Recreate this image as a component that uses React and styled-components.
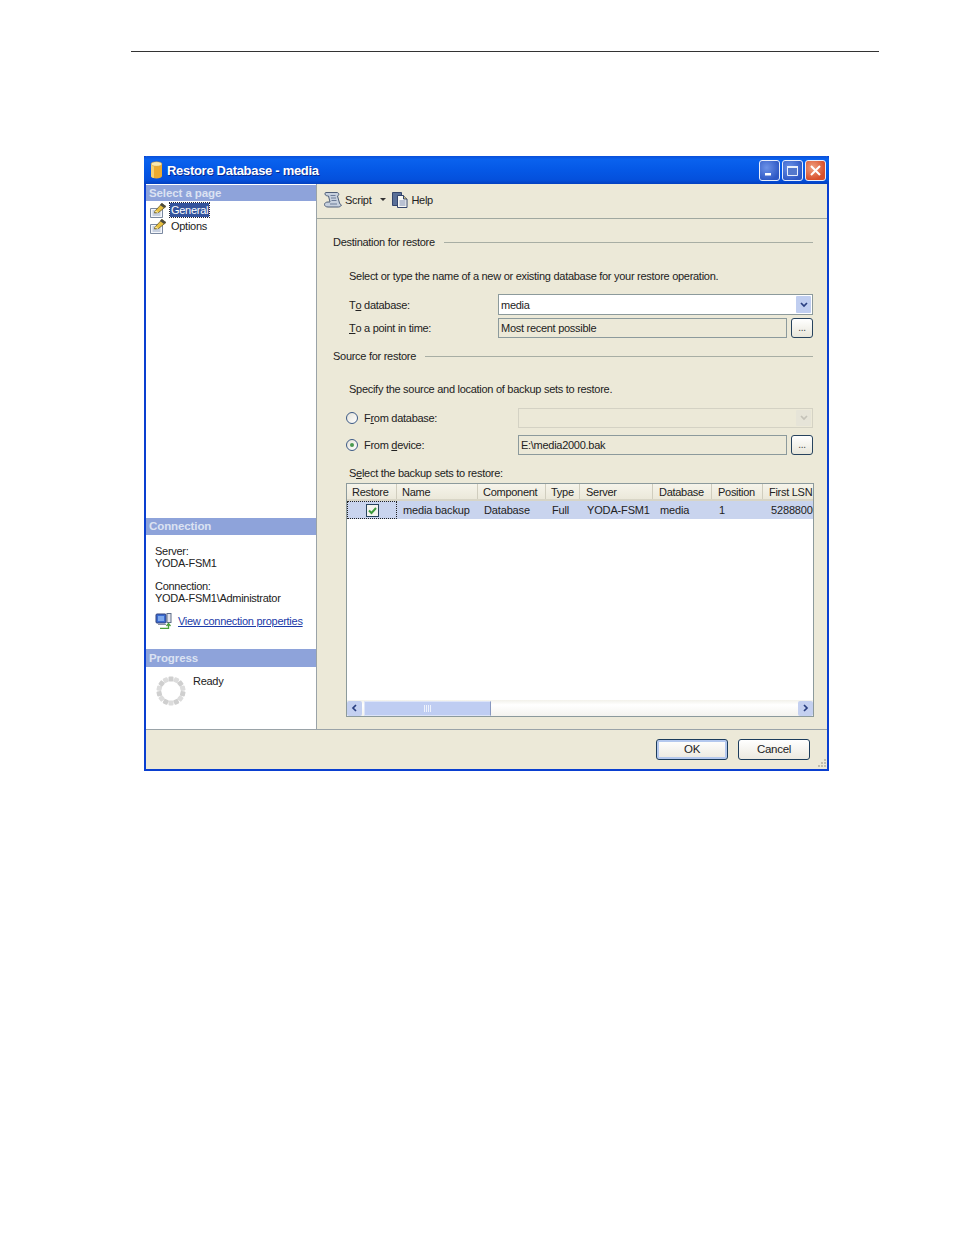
import React from 'react';
import styled, { createGlobalStyle } from 'styled-components';

const Global = createGlobalStyle`
  html, body { margin: 0; padding: 0; background: #fff; }
  body { font-family: "Liberation Sans", Arial, sans-serif; font-size: 11px; letter-spacing: -0.28px; color: #222; }
`;

const Page = styled.div`
  width: 954px;
  height: 1235px;
  padding: 51px 0 0 0;
  box-sizing: border-box;
  overflow: hidden;
`;

const TopRule = styled.div`
  margin-left: 131px;
  width: 748px;
  height: 1px;
  background: #333;
`;

const Window = styled.div`
  margin: 104px 0 0 144px;
  width: 685px;
  height: 615px;
  box-sizing: border-box;
  border: 2px solid #0a3fd0;
  border-top: none;
  display: flex;
  flex-direction: column;
  background: #ece9d8;
  position: relative;
`;

const TitleBar = styled.div`
  height: 28px;
  margin: 0 -2px;
  flex: none;
  display: flex;
  align-items: center;
  padding: 0 3px 0 6px;
  background: linear-gradient(180deg, #0a4fd8 0%, #0a62ee 12%, #0558e6 50%, #0450dc 85%, #0340c0 100%);
  border-radius: 3px 3px 0 0;
`;

const TitleText = styled.span`
  margin-left: 4px;
  flex: 1;
  color: #fff;
  font-weight: 700;
  font-size: 13px;
  letter-spacing: -0.3px;
  text-shadow: 1px 1px 0 #0a2a90;
`;

const CtlButton = styled.div`
  width: 21px;
  height: 21px;
  margin-left: 2px;
  box-sizing: border-box;
  border: 1px solid #e8eefc;
  border-radius: 3px;
  background: ${p => p.$close
    ? 'radial-gradient(circle at 35% 35%, #f0a080, #d8502c 70%)'
    : 'radial-gradient(circle at 35% 35%, #6c92e8, #2e58c4 75%)'};
  display: flex;
  align-items: center;
  justify-content: center;
`;

const Body = styled.div`
  flex: 1;
  display: flex;
  min-height: 0;
`;

const Sidebar = styled.div`
  width: 171px;
  flex: none;
  box-sizing: border-box;
  background: #fff;
  border-right: 1px solid #9aa3a8;
  display: flex;
  flex-direction: column;
  padding-top: 1px;
`;

const SideHead = styled.div`
  height: ${p => p.$h}px;
  flex: none;
  background: #8ea3da;
  color: #dbe2f2;
  font-weight: 700;
  font-size: 11.5px;
  letter-spacing: -0.1px;
  line-height: ${p => p.$h}px;
  padding-left: 3px;
`;

const PageList = styled.div`
  flex: 1;
  padding: 1px 0 0 4px;
`;

const PageItem = styled.div`
  height: 16px;
  display: flex;
  align-items: center;
  gap: 3px;
`;

const PageName = styled.span`
  padding: 0 1px;
  line-height: 14px;
  font-size: 11px;
  color: ${p => (p.$active ? '#fff' : '#222')};
  background: ${p => (p.$active ? '#34539c' : 'transparent')};
  outline: ${p => (p.$active ? '1px dotted #223' : 'none')};
`;

const ConnBody = styled.div`
  height: 114px;
  flex: none;
  box-sizing: border-box;
  padding: 10px 0 0 9px;
`;

const Line = styled.div`
  height: 12px;
  line-height: 12px;
  margin-top: ${p => p.$top || 0}px;
  white-space: nowrap;
`;

const LinkRow = styled.div`
  display: flex;
  align-items: center;
  gap: 6px;
  margin-top: 9px;
  height: 16px;
`;

const Link = styled.span`
  color: #1a3aa8;
  text-decoration: underline;
`;

const ProgressBody = styled.div`
  flex: none;
  height: 62px;
  box-sizing: border-box;
  padding: 8px 0 0 9px;
  display: flex;
  gap: 6px;
`;

const ReadyText = styled.span`
  line-height: 12px;
`;

const Main = styled.div`
  flex: 1;
  display: flex;
  flex-direction: column;
  min-width: 0;
`;

const Toolbar = styled.div`
  height: 35px;
  flex: none;
  box-sizing: border-box;
  border-bottom: 1px solid #a0a8a0;
  display: flex;
  align-items: center;
  padding: 0 0 3px 7px;
`;

const ToolButton = styled.div`
  display: flex;
  align-items: center;
  gap: 3px;
  margin-right: ${p => p.$gap || 0}px;
`;

const DropCaret = styled.span`
  width: 0;
  height: 0;
  margin-left: 6px;
  border-left: 3px solid transparent;
  border-right: 3px solid transparent;
  border-top: 3px solid #333;
`;

const Content = styled.div`
  flex: 1;
  box-sizing: border-box;
  padding: 16px 13px 0 16px;
`;

const SectionHead = styled.div`
  height: 14px;
  line-height: 14px;
  margin: ${p => p.$top || 0}px 1px 0 0;
  display: flex;
  align-items: center;
  gap: 9px;
  white-space: nowrap;
  &::after {
    content: '';
    flex: 1;
    height: 1px;
    background: #a8aea4;
  }
`;

const Hint = styled.div`
  height: 14px;
  line-height: 14px;
  margin: ${p => p.$top}px 0 0 16px;
  white-space: nowrap;
`;

const Row = styled.div`
  display: grid;
  grid-template-columns: ${p => p.$label}px 1fr ${p => (p.$browse ? '22px' : '')};
  column-gap: ${p => (p.$browse ? 4 : 0)}px;
  align-items: center;
  margin: ${p => p.$top}px 1px 0 ${p => p.$left}px;
  height: ${p => p.$h}px;
`;

const Label = styled.span`
  white-space: nowrap;
  display: flex;
  align-items: center;
`;

const Radio = styled.span`
  width: 12px;
  height: 12px;
  margin-right: 6px;
  box-sizing: border-box;
  border-radius: 50%;
  border: 1px solid #3c5a86;
  background: linear-gradient(135deg, #e4e2d8, #fff);
  display: flex;
  align-items: center;
  justify-content: center;
  &::after {
    content: '';
    width: 4px;
    height: 4px;
    border-radius: 50%;
    background: ${p => (p.$on ? '#4a9a50' : 'transparent')};
  }
`;

const Field = styled.div`
  height: ${p => p.$h}px;
  box-sizing: border-box;
  border: 1px solid ${p => (p.$empty ? '#d4d2c4' : '#8c9a9c')};
  background: ${p => (p.$white ? '#fff' : '#ece9d8')};
  display: flex;
  align-items: center;
  padding-left: 2px;
`;

const FieldText = styled.span`
  flex: 1;
`;

const ComboArrow = styled.span`
  width: 15px;
  align-self: stretch;
  margin: 1px;
  border-radius: 1px;
  background: ${p => (p.$off ? '#e6e4d8' : '#c0cef0')};
  display: flex;
  align-items: center;
  justify-content: center;
`;

const Browse = styled.div`
  height: 20px;
  box-sizing: border-box;
  border: 1px solid #27435e;
  border-radius: 3px;
  background: linear-gradient(180deg, #fff, #e8e6da);
  text-align: center;
  line-height: 17px;
  color: #444;
  font-size: 10px;
`;

const GridBox = styled.div`
  margin: 3px 0 0 13px;
  height: 234px;
  box-sizing: border-box;
  border: 1px solid #8c9a9c;
  background: #fff;
  display: flex;
  flex-direction: column;
  overflow: hidden;
`;

const GridHead = styled.div`
  height: 15px;
  flex: none;
  display: flex;
  background: linear-gradient(180deg, #f6f4ea, #ebe8da);
  border-bottom: 2px solid #d8d5c6;
`;

const HeadCell = styled.div`
  width: ${p => p.$w}px;
  flex: none;
  box-sizing: border-box;
  padding-left: ${p => p.$pad}px;
  line-height: 16px;
  white-space: nowrap;
  border-right: 1px solid #d0cdbe;
  &:last-child { border-right: none; }
`;

const GridRow = styled.div`
  height: 18px;
  flex: none;
  display: flex;
  background: #c9d4ee;
`;

const Cell = styled.div`
  width: ${p => p.$w}px;
  flex: none;
  box-sizing: border-box;
  padding-left: ${p => p.$pad}px;
  line-height: 18px;
  letter-spacing: -0.15px;
  white-space: nowrap;
  overflow: hidden;
`;

const CheckCell = styled.div`
  width: ${p => p.$w}px;
  flex: none;
  box-sizing: border-box;
  outline: 1px dotted #222;
  outline-offset: -1px;
  display: flex;
  align-items: center;
  justify-content: center;
`;

const GridFill = styled.div`
  flex: 1;
`;

const ScrollBar = styled.div`
  height: 16px;
  flex: none;
  display: flex;
  align-items: center;
  background: linear-gradient(180deg, #f2f1ea, #fff 30%, #f4f3ee);
`;

const ScrollBtn = styled.div`
  width: 15px;
  height: 15px;
  flex: none;
  background: #c4d0f0;
  border-radius: 2px;
  display: flex;
  align-items: center;
  justify-content: center;
`;

const Thumb = styled.div`
  width: 127px;
  height: 15px;
  margin-left: 2px;
  box-sizing: border-box;
  background: #bfcdf2;
  border: 1px solid #dde4f8;
  border-right-color: #8898c0;
  display: flex;
  align-items: center;
  justify-content: center;
`;

const ScrollGap = styled.div`
  flex: 1;
`;

const Footer = styled.div`
  height: 40px;
  flex: none;
  box-sizing: border-box;
  border-top: 1px solid #9aa3a8;
  display: flex;
  justify-content: flex-end;
  gap: 10px;
  padding: 9px 17px 0 0;
`;

const DlgButton = styled.div`
  width: 72px;
  height: 21px;
  box-sizing: border-box;
  border: 1px solid #1c3c5c;
  border-radius: 3px;
  background: linear-gradient(180deg, #fff, #ece9e0);
  box-shadow: ${p => (p.$primary ? 'inset 0 0 0 2px #b4c8ee' : 'none')};
  text-align: center;
  line-height: 19px;
  font-size: 11.5px;
`;

const Grip = styled.svg`
  position: absolute;
  right: 0;
  bottom: 0;
`;

const Underlined = styled.span`
  text-decoration: underline;
`;

const columns = [
  { title: 'Restore', w: 50, pad: 5 },
  { title: 'Name', value: 'media backup', w: 81, pad: 5, cellPad: 6 },
  { title: 'Component', value: 'Database', w: 68, pad: 5, cellPad: 6 },
  { title: 'Type', value: 'Full', w: 34, pad: 5, cellPad: 6 },
  { title: 'Server', value: 'YODA-FSM1', w: 73, pad: 6, cellPad: 7 },
  { title: 'Database', value: 'media', w: 59, pad: 6, cellPad: 7 },
  { title: 'Position', value: '1', w: 51, pad: 6, cellPad: 7 },
  { title: 'First LSN', value: '5288800000', w: 50, pad: 6, cellPad: 8 },
];

function DbIcon() {
  return (
    <svg width="13" height="18" viewBox="0 0 13 18">
      <path d="M1 3v12c0 1.5 2.500 2.500 5.500 2.500S12 16.500 12 15V3z" fill="#ecab30" />
      <path d="M1 3v12c0 1 1 1.700 3 2.100V3z" fill="#f6d070" />
      <ellipse cx="6.500" cy="3" rx="5.500" ry="2.300" fill="#f8e8b0" stroke="#c88a20" strokeWidth=".5" />
    </svg>
  );
}

function PageIcon() {
  return (
    <svg width="17" height="16" viewBox="0 0 17 16">
      <path d="M.5 6.500h12v9H.5z" fill="#f4f6fa" stroke="#7a88a0" />
      <path d="M2.500 9h8M2.500 11h8M2.500 13h8" stroke="#98a8c4" />
      <path d="M5 9l7-7.500 4 3-7.500 6L4.500 11z" fill="#e8c040" stroke="#6a5a28" strokeWidth=".8" />
      <path d="M11.500 1L16 4.200 14 6 10 3z" fill="#4a4a40" />
      <path d="M5 9l3 1.500" stroke="#fff2b0" />
    </svg>
  );
}

function ScriptIcon() {
  return (
    <svg width="18" height="17" viewBox="0 0 18 17">
      <path d="M2 1.500h11c2 0 2.500 3 .5 3.500l2 7c.5 1.500 2 2 2 2s-1 2-3 2H4c-2 0-3.500-1-3.500-2.500S2 11 4 11h2L4.500 5C3 5 1 4.500 1 3s.5-1.500 1-1.500z" fill="#c6d0de" stroke="#4e5e78" />
      <path d="M6.500 4.500h5M7 7h5M7.500 9.500h5M6 13h7" stroke="#6c7c98" />
    </svg>
  );
}

function HelpIcon() {
  return (
    <svg width="16" height="17" viewBox="0 0 16 17">
      <path d="M.5 1.500h9v13h-9z" fill="#5a7098" stroke="#34466c" />
      <path d="M5.500 4.500h6l3.500 3.500v8.500H5.500z" fill="#f8f8f4" stroke="#34466c" />
      <path d="M11.500 4.500V8H15" fill="#d8c880" stroke="#34466c" />
      <path d="M7.500 10h6M7.500 12h6M7.500 14h6" stroke="#7a8ab0" />
    </svg>
  );
}

function ComputerIcon() {
  return (
    <svg width="17" height="16" viewBox="0 0 17 16">
      <rect x="1" y="1" width="10" height="9" rx="1" fill="#3a6ad0" stroke="#30407a" />
      <rect x="3" y="3" width="6" height="5" fill="#7ea8ec" />
      <rect x="12" y="0.500" width="4" height="9" fill="#e4e4ec" stroke="#60708a" />
      <path d="M3 11h8v1H3z" fill="#8a92a8" />
      <path d="M5 15.500h8.500V11M11.500 13l2-2.500 2 2.500" fill="none" stroke="#4aa03a" strokeWidth="1.300" />
    </svg>
  );
}

function Spinner() {
  const dots = Array.from({ length: 14 }, (_, i) => (i * 360) / 14);
  return (
    <svg width="32" height="32" viewBox="0 0 32 32">
      {dots.map((a, i) => (
        <rect key={a} x="13.500" y="1.500" width="5" height="5" rx="1" fill={i % 2 === 0 ? '#cfcfcf' : '#dcdcdc'} transform={`rotate(${a} 16 16)`} />
      ))}
    </svg>
  );
}

function Chevron({ dir = 'down', color = '#2a3f80' }) {
  const d = { down: 'M1 2l3 3 3-3', left: 'M5 1L2 4l3 3', right: 'M2 1l3 3-3 3' }[dir];
  return (
    <svg width="8" height="8" viewBox="0 0 8 8">
      <path d={d} fill="none" stroke={color} strokeWidth="1.700" />
    </svg>
  );
}

export default function App() {
  return (
    <Page>
      <Global />
      <TopRule />
      <Window>
        <TitleBar>
          <DbIcon />
          <TitleText>Restore Database - media</TitleText>
          <CtlButton>
            <svg width="13" height="13" viewBox="0 0 13 13"><path d="M2 9h6v2.500H2z" fill="#fff" /></svg>
          </CtlButton>
          <CtlButton>
            <svg width="13" height="13" viewBox="0 0 13 13"><path d="M1.500 2.500h10v9h-10z" fill="#5478cc" stroke="#e8eefc" /><path d="M1 2h11v2H1z" fill="#e8eefc" /></svg>
          </CtlButton>
          <CtlButton $close>
            <svg width="13" height="13" viewBox="0 0 13 13"><path d="M2 2l9 9M11 2l-9 9" stroke="#fff" strokeWidth="2" /></svg>
          </CtlButton>
        </TitleBar>
        <Body>
          <Sidebar>
            <SideHead $h={16}>Select a page</SideHead>
            <PageList>
              <PageItem><PageIcon /><PageName $active>General</PageName></PageItem>
              <PageItem><PageIcon /><PageName>Options</PageName></PageItem>
            </PageList>
            <SideHead $h={17}>Connection</SideHead>
            <ConnBody>
              <Line>Server:</Line>
              <Line>YODA-FSM1</Line>
              <Line $top={11}>Connection:</Line>
              <Line>YODA-FSM1\Administrator</Line>
              <LinkRow><ComputerIcon /><Link>View connection properties</Link></LinkRow>
            </ConnBody>
            <SideHead $h={18}>Progress</SideHead>
            <ProgressBody>
              <Spinner />
              <ReadyText>Ready</ReadyText>
            </ProgressBody>
          </Sidebar>
          <Main>
            <Toolbar>
              <ToolButton $gap={6}><ScriptIcon />Script<DropCaret /></ToolButton>
              <ToolButton><HelpIcon />Help</ToolButton>
            </Toolbar>
            <Content>
              <SectionHead>Destination for restore</SectionHead>
              <Hint $top={20}>Select or type the name of a new or existing database for your restore operation.</Hint>
              <Row $label={149} $left={16} $top={11} $h={21}>
                <Label>T<Underlined>o</Underlined>&nbsp;database:</Label>
                <Field $h={21} $white>
                  <FieldText>media</FieldText>
                  <ComboArrow><Chevron /></ComboArrow>
                </Field>
              </Row>
              <Row $label={145} $left={16} $top={3} $h={20} $browse>
                <Label><Underlined>T</Underlined>o a point in time:</Label>
                <Field $h={20}><FieldText>Most recent possible</FieldText></Field>
                <Browse>...</Browse>
              </Row>
              <SectionHead $top={11}>Source for restore</SectionHead>
              <Hint $top={19}>Specify the source and location of backup sets to restore.</Hint>
              <Row $label={172} $left={13} $top={12} $h={20}>
                <Label><Radio />F<Underlined>r</Underlined>om database:</Label>
                <Field $h={20} $empty>
                  <FieldText />
                  <ComboArrow $off><Chevron color="#c4c2b8" /></ComboArrow>
                </Field>
              </Row>
              <Row $label={168} $left={13} $top={7} $h={20} $browse>
                <Label><Radio $on />From&nbsp;<Underlined>d</Underlined>evice:</Label>
                <Field $h={20}><FieldText>E:\media2000.bak</FieldText></Field>
                <Browse>...</Browse>
              </Row>
              <Hint $top={11}>S<Underlined>e</Underlined>lect the backup sets to restore:</Hint>
              <GridBox>
                <GridHead>
                  {columns.map(c => <HeadCell key={c.title} $w={c.w} $pad={c.pad}>{c.title}</HeadCell>)}
                </GridHead>
                <GridRow>
                  <CheckCell $w={50}>
                    <svg width="13" height="13" viewBox="0 0 13 13">
                      <rect x=".5" y=".5" width="12" height="12" fill="#f4f4ee" stroke="#27435e" />
                      <path d="M3 6.500l2.500 2.500L10 4" fill="none" stroke="#3a9a3a" strokeWidth="2" />
                    </svg>
                  </CheckCell>
                  {columns.slice(1).map(c => <Cell key={c.title} $w={c.w} $pad={c.cellPad}>{c.value}</Cell>)}
                </GridRow>
                <GridFill />
                <ScrollBar>
                  <ScrollBtn><Chevron dir="left" /></ScrollBtn>
                  <Thumb>
                    <svg width="8" height="7" viewBox="0 0 8 7"><path d="M.5 0v7M2.500 0v7M4.500 0v7M6.500 0v7" stroke="#eef2fc" /></svg>
                  </Thumb>
                  <ScrollGap />
                  <ScrollBtn><Chevron dir="right" /></ScrollBtn>
                </ScrollBar>
              </GridBox>
            </Content>
          </Main>
        </Body>
        <Footer>
          <DlgButton $primary>OK</DlgButton>
          <DlgButton>Cancel</DlgButton>
        </Footer>
        <Grip width="12" height="12" viewBox="0 0 12 12">
          <path d="M9 2h2v2H9zM6 5h2v2H6zM9 5h2v2H9zM3 8h2v2H3zM6 8h2v2H6zM9 8h2v2H9z" fill="#c0bdae" />
        </Grip>
      </Window>
    </Page>
  );
}
